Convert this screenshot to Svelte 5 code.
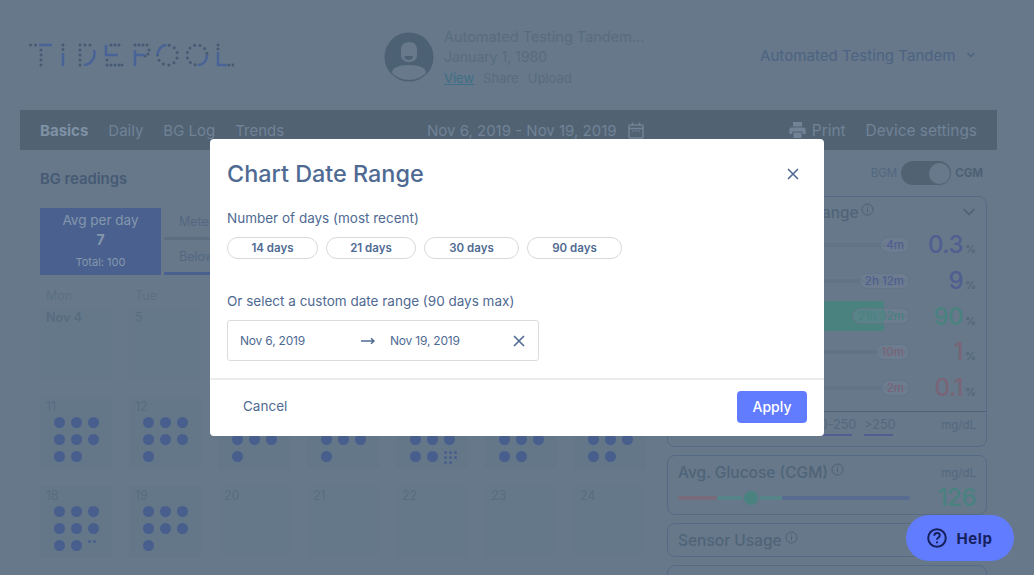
<script>
  const navLinks = ['Daily', 'BG Log', 'Trends'];
  const dayOptions = ['14 days', '21 days', '30 days', '90 days'];
  // only the first two columns stick out from under the dialog
  const weekdays = ['Mon', 'Tue', '', '', '', '', ''];

  const firstWeek = ['Nov 4', '5', '', '', '', '', ''];

  const weeks = [
    [
      { label: '11', dots: 8 },
      { label: '12', dots: 7 },
      { label: '13', dots: 7 },
      { label: '14', dots: 7 },
      { label: '15', dots: 8, extra: 8 },
      { label: '16', dots: 8 },
      { label: '17', dots: 8 }
    ],
    [
      { label: '18', dots: 8, extra: 2 },
      { label: '19', dots: 7 },
      { label: '20', dots: 0, empty: true },
      { label: '21', dots: 0, empty: true },
      { label: '22', dots: 0, empty: true },
      { label: '23', dots: 0, empty: true },
      { label: '24', dots: 0, empty: true }
    ]
  ];

  const ranges = [
    { time: '4m', value: '0.3', color: '#505e90', bar: 0 },
    { time: '2h 12m', value: '9', color: '#505e90', bar: 0 },
    { time: '21h 32m', value: '90', color: '#4a8280', bar: 89 },
    { time: '10m', value: '1', color: '#7a6477', bar: 0 },
    { time: '2m', value: '0.1', color: '#7a6477', bar: 0 }
  ];

  const legend = [
    { text: '<54', width: 20, color: '#7a6477' },
    { text: '54-70', width: 33, color: '#7a6477' },
    { text: '70-180', width: 40, color: '#4a8280' },
    { text: '180-250', width: 45, color: '#505e90' },
    { text: '>250', width: 29, color: '#505e90' }
  ];

  function ring(cx, cy, from, to, count) {
    const dots = [];
    for (let i = 0; i < count; i++) {
      const a = ((from + ((to - from) * i) / (count - 1)) * Math.PI) / 180;
      dots.push([cx + 10 * Math.cos(a), cy + 10 * Math.sin(a)]);
    }
    return dots;
  }

  // dotted logo, solid strokes are in the path below
  const logoDots = [
    [30.5, 45], [35.5, 45], [41, 50], [41, 55], [41, 60], [41, 65],
    [63, 45], [63, 49.5],
    [80, 45], [80, 50], [80, 55], [80, 60], [80, 65], [85, 45], [90, 45],
    [111, 45], [115, 45], [119, 45], [107, 60], [107, 65], [111, 65], [115, 65], [119, 65], [122, 65],
    [135, 45], [139, 45], [143, 45], [147, 45], [149, 50], [148, 54], [145, 56],
    ...ring(167.5, 55, -80, 180, 9),
    ...ring(197, 55, 100, 350, 9),
    [218, 45], [218, 49], [229, 65], [233, 65]
  ];
</script>

<div class="page">
  <header class="top">
    <svg class="logo" width="234" height="110" viewBox="0 0 234 110" aria-label="Tidepool">
      {#each logoDots as [x, y]}
        <circle cx={x} cy={y} r="1.500" />
      {/each}
      <path class="logo-solid" d="M39 45h13M63 53v13M94 50c2 7-2 14-10 15M106 45v10h12M135 50v16M135 55h10M157.500 55c0-5 4-10 9-10M207 55c0 6-4 10-9 10M218 52v13h9" />
    </svg>

    <div class="patient">
      <div class="avatar">
        <svg width="50" height="50" viewBox="0 0 50 50">
          <circle cx="25" cy="25" r="24.500" fill="#4d6175" />
          <path d="M25 10c5 0 8 3 8 7.500v6c0 4-3.500 6.500-8 6.500s-8-2.500-8-6.500v-6c0-4.500 3-7.500 8-7.500z" fill="#67798b" />
          <path d="M20.500 24h8.500c0 2.700-1.900 4-4.200 4s-4.300-1.300-4.300-4z" fill="#4d6175" />
          <path d="M8 41c0-5 6-8 17-8s17 3 17 8c-4 4-10 7-17 7s-13-3-17-7z" fill="#67798b" />
        </svg>
      </div>
      <div class="patient-info">
        <div class="patient-name">Automated Testing Tandem...</div>
        <div class="patient-dob">January 1, 1980</div>
        <div class="patient-links">
          <span class="active">View</span>
          <span>Share</span>
          <span>Upload</span>
        </div>
      </div>
    </div>

    <div class="account">
      <span>Automated Testing Tandem</span>
      <svg width="10" height="6" viewBox="0 0 10 6" fill="none" stroke="#4d6382" stroke-width="1.500"><path d="M1.500 1l3.500 3.500 3.500-3.500" /></svg>
    </div>
  </header>

  <nav class="nav">
    <div class="nav-left">
      <span class="nav-active">Basics</span>
      {#each navLinks as link}
        <span>{link}</span>
      {/each}
    </div>
    <div class="nav-date">
      <span>Nov 6, 2019 - Nov 19, 2019</span>
      <svg width="16" height="17" viewBox="0 0 16 17" fill="none" stroke="#708397" stroke-width="1.500">
        <rect x="1" y="3" width="14" height="13" rx="1" />
        <path d="M1 6.500h14M4.500 .5v3M11.500 .5v3" />
        <path d="M4 9h2M7 9h2M10 9h2" stroke-width="1" />
      </svg>
    </div>
    <div class="nav-right">
      <span class="print">
        <svg width="17" height="16" viewBox="0 0 17 16" fill="#708397">
          <path d="M4 0h9v4.500H4zM2.500 5.500h12c1.200 0 2.200 1 2.200 2.200v4.300h-3V9.500H3.300V12h-3V7.700c0-1.200 1-2.200 2.200-2.200zM4.500 10.500h8V16h-8z" />
        </svg>
        Print
      </span>
      <span>Device settings</span>
    </div>
  </nav>

  <main class="content">
    <section class="readings">
      <h2>BG readings</h2>
      <div class="summary">
        <div class="avg">
          <div class="avg-label">Avg per day</div>
          <div class="avg-value">7</div>
          <div class="avg-total">Total: 100</div>
        </div>
        <div class="summary-stats">
          <div class="stat">Meter</div>
          <div class="stat stat-active">Below</div>
        </div>
      </div>

      <div class="weekdays">
        {#each weekdays as name}
          <div class="weekday">{name}</div>
        {/each}
      </div>

      <div class="calendar">
        {#each firstWeek as label, i}
          <div class="day plain">
            <div class="day-num" class:bold={i === 0}>{label}</div>
          </div>
        {/each}

        {#each weeks as week}
          {#each week as day}
            <div class="day" class:empty={day.empty}>
              <div class="day-num">{day.label}</div>
              <div class="dots">
                {#each Array(day.dots) as _}
                  <span class="dot"></span>
                {/each}
                {#if day.extra}
                  <span class="mini">
                    {#each Array(day.extra) as _}<i></i>{/each}
                  </span>
                {/if}
              </div>
            </div>
          {/each}
        {/each}
      </div>
    </section>

    <aside class="sidebar">
      <div class="toggle-row">
        <span>BGM</span>
        <span class="switch"><span class="knob"></span></span>
        <span class="toggle-on">CGM</span>
      </div>

      <div class="card tir">
        <div class="card-head">
          <span class="card-title">Avg. Daily Time In Range</span>
          <svg class="info" width="13" height="13" viewBox="0 0 13 13" fill="none" stroke="#4d6175"><circle cx="6.500" cy="6.500" r="5.500" /><path d="M6.500 5.500v4M6.500 3v1.200" /></svg>
          <svg class="chev" width="14" height="8" viewBox="0 0 14 8" fill="none" stroke="#4d6175" stroke-width="1.500"><path d="M1.500 1l5.500 5.500 5.500-5.500" /></svg>
        </div>
        {#each ranges as row}
          <div class="range">
            <div class="track">
              {#if row.bar}<div class="fill" style="width: {row.bar}%"></div>{/if}
              <span class="time" style="color: {row.color}">{row.time}</span>
            </div>
            <div class="pct"><span style="color: {row.color}">{row.value}</span><small>%</small></div>
          </div>
        {/each}
        <div class="legend">
          {#each legend as item}
            <span class="seg" style="width: {item.width}px; border-color: {item.color}">{item.text}</span>
          {/each}
          <span class="unit">mg/dL</span>
        </div>
      </div>

      <div class="card glucose">
        <div class="glucose-head">
          <span class="card-title">Avg. Glucose (CGM)</span>
          <svg class="info" width="13" height="13" viewBox="0 0 13 13" fill="none" stroke="#4d6175"><circle cx="6.500" cy="6.500" r="5.500" /><path d="M6.500 5.500v4M6.500 3v1.200" /></svg>
          <span class="unit">mg/dL</span>
        </div>
        <div class="glucose-row">
          <div class="scale">
            <span class="marker"></span>
          </div>
          <span class="glucose-value">126</span>
        </div>
      </div>

      <div class="card usage">
        <span class="card-title">Sensor Usage</span>
        <svg class="info" width="13" height="13" viewBox="0 0 13 13" fill="none" stroke="#4d6175"><circle cx="6.500" cy="6.500" r="5.500" /><path d="M6.500 5.500v4M6.500 3v1.200" /></svg>
      </div>
      <div class="card stub"></div>
    </aside>
  </main>
</div>

<div class="modal">
  <div class="modal-head">
    <h1>Chart Date Range</h1>
    <button class="close" aria-label="Close">
      <svg width="12" height="12" viewBox="0 0 12 12" fill="none" stroke="#4f6a92" stroke-width="1.600"><path d="M1 1l10 10M11 1L1 11" /></svg>
    </button>
  </div>
  <div class="modal-body">
    <div class="field-label">Number of days (most recent)</div>
    <div class="pills">
      {#each dayOptions as option}
        <button class="pill">{option}</button>
      {/each}
    </div>
    <div class="field-label custom">Or select a custom date range (90 days max)</div>
    <div class="date-range">
      <span class="date">Nov 6, 2019</span>
      <svg class="arrow" width="14" height="8" viewBox="0 0 14 8" fill="none" stroke="#4f6a92" stroke-width="1.500"><path d="M0 4h13M10 1.200L13 4l-3 2.800" /></svg>
      <span class="date">Nov 19, 2019</span>
      <svg class="clear" width="12" height="12" viewBox="0 0 12 12" fill="none" stroke="#4f6a92" stroke-width="1.600"><path d="M1 1l10 10M11 1L1 11" /></svg>
    </div>
  </div>
  <div class="modal-foot">
    <button class="cancel">Cancel</button>
    <button class="apply">Apply</button>
  </div>
</div>

<button class="help">
  <svg width="20" height="20" viewBox="0 0 20 20" fill="none" stroke="#15205e" stroke-width="2">
    <circle cx="10" cy="10" r="8.800" />
    <path d="M7.300 7.800c0-1.700 1.200-2.700 2.800-2.700s2.700 1 2.700 2.400c0 2-2.800 2-2.800 4.200" />
    <path d="M10 13.600v1.700" />
  </svg>
  Help
</button>

<style>
  :global(body) {
    margin: 0;
    background: #66788a;
    overflow: hidden;
    font-family: Inter, "Liberation Sans", sans-serif;
  }

  .page {
    width: 1034px;
    height: 575px;
    overflow: hidden;
    color: #4d6175;
  }

  .top {
    height: 110px;
    display: flex;
    align-items: flex-start;
  }

  .logo {
    flex-shrink: 0;
  }

  .logo circle {
    fill: #465a74;
  }

  .logo-solid {
    fill: none;
    stroke: #4a6396;
    stroke-width: 2.500;
  }

  .patient {
    display: flex;
    align-items: flex-start;
    gap: 10px;
    margin: 26px 0 0 150px;
    width: 376px;
    color: #586c80;
    font-size: 14px;
    line-height: 20.500px;
  }

  .avatar {
    height: 50px;
    margin-top: 6px;
  }

  .patient-name {
    font-size: 14.500px;
    line-height: 21px;
  }

  .patient-links {
    display: flex;
    gap: 9px;
    font-size: 13px;
  }

  .patient-links .active {
    color: #3e6f86;
    text-decoration: underline;
  }

  .account {
    display: flex;
    align-items: center;
    gap: 10px;
    font-size: 15.100px;
    color: #4d6382;
    height: 110px;
  }

  .nav {
    width: 977px;
    height: 40px;
    padding: 0 20px;
    margin-left: 20px;
    box-sizing: border-box;
    background: #516273;
    display: grid;
    grid-template-columns: 387px auto 1fr;
    align-items: center;
    color: #708397;
    font-size: 15px;
  }

  .nav-left {
    display: flex;
    gap: 20px;
  }

  .nav-active {
    font-weight: 700;
    color: #7f92a6;
  }

  .nav-date {
    display: flex;
    align-items: center;
    gap: 11px;
  }

  .nav-right {
    display: flex;
    justify-content: flex-end;
    gap: 20px;
    font-size: 15.400px;
  }

  .print {
    display: flex;
    align-items: center;
    gap: 6px;
  }

  .content {
    display: flex;
    padding-left: 40px;
  }

  .readings {
    width: 627px;
    flex-shrink: 0;
  }

  h2 {
    margin: 20px 0 0;
    font-size: 14.800px;
    line-height: 18px;
    font-weight: 600;
    color: #465a74;
  }

  .summary {
    display: flex;
    gap: 3px;
    margin-top: 20px;
  }

  .avg {
    width: 121px;
    height: 67px;
    background: #4a6190;
    color: #8597ab;
    text-align: center;
    padding-top: 3px;
    box-sizing: border-box;
  }

  .avg-label {
    font-size: 13.500px;
    line-height: 18px;
  }

  .avg-value {
    font-size: 14px;
    font-weight: 700;
    line-height: 20px;
    margin-top: 1px;
  }

  .avg-total {
    font-size: 11px;
    line-height: 14px;
    margin-top: 5px;
  }

  .summary-stats {
    flex: 1;
    display: grid;
    grid-template-rows: 32px 35px;
  }

  .stat {
    border-bottom: 3px solid #5c6f81;
    font-size: 12.500px;
    line-height: 16px;
    padding: 6px 0 0 15px;
    color: #536880;
    box-sizing: border-box;
  }

  .stat-active {
    border-bottom-color: #4a6190;
    padding-top: 9px;
  }

  .weekdays, .calendar {
    display: grid;
    grid-template-columns: repeat(7, 72px);
    column-gap: 17px;
  }

  .weekdays {
    margin: 13px 0 4px;
    grid-auto-rows: 16px;
  }

  .calendar {
    grid-auto-rows: 72px;
    row-gap: 17px;
  }

  .day {
    background: #637789;
    box-sizing: border-box;
    padding-top: 2px;
  }

  .day.plain, .day.empty {
    background: #65788a;
  }

  .weekday {
    font-size: 12.500px;
    line-height: 16px;
    padding-left: 6px;
    color: #5c7084;
  }

  .day-num {
    font-size: 12.500px;
    line-height: 16px;
    padding-left: 6px;
    color: #586c80;
  }

  .bold {
    font-weight: 700;
  }

  .dots {
    display: grid;
    grid-template-columns: repeat(3, 11px);
    grid-auto-rows: 11px;
    gap: 6px;
    padding-left: 14px;
    margin-top: 2px;
  }

  .dot {
    border-radius: 50%;
    background: #485e8d;
  }

  .mini {
    display: grid;
    grid-template-columns: repeat(3, 3px);
    grid-auto-rows: 3px;
    gap: 2px;
    align-content: start;
  }

  .mini i {
    background: #485e8d;
    border-radius: 50%;
  }

  .sidebar {
    width: 320px;
    margin-top: 11px;
    display: flex;
    flex-direction: column;
    gap: 8px;
  }

  .toggle-row {
    display: flex;
    justify-content: flex-end;
    align-items: center;
    gap: 4px;
    font-size: 11.500px;
    height: 24px;
    margin-bottom: 3px;
    color: #536880;
    padding-right: 4px;
  }

  .toggle-on {
    font-weight: 700;
    color: #4d6175;
  }

  .switch {
    width: 50px;
    height: 24px;
    border-radius: 12px;
    background: #516273;
    display: flex;
    justify-content: flex-end;
    align-items: center;
    padding-right: 1px;
    box-sizing: border-box;
  }

  .knob {
    width: 21px;
    height: 21px;
    border-radius: 50%;
    background: #68798b;
  }

  .card {
    border: 1px solid #556b85;
    border-radius: 8px;
    box-sizing: border-box;
    flex-shrink: 0;
  }

  .tir {
    height: 251px;
  }

  .card-head {
    height: 30px;
    display: flex;
    align-items: center;
    padding: 0 10px;
    gap: 3px;
  }

  .card-title {
    font-size: 15.500px;
    font-weight: 500;
    color: #4f6478;
  }

  .tir .card-title {
    font-size: 15.250px;
  }

  .info {
    margin-bottom: 6px;
  }

  .chev {
    margin-left: auto;
  }

  .range {
    display: flex;
    align-items: center;
    height: 35.700px;
    padding: 0 10px;
  }

  .track {
    flex: 1;
    height: 4px;
    background: #617487;
    border-radius: 2px;
    position: relative;
    display: flex;
    align-items: center;
    justify-content: flex-end;
  }

  .fill {
    position: absolute;
    left: 0;
    top: -13px;
    height: 30px;
    background: #4a8280;
  }

  .time {
    position: relative;
    font-size: 11.500px;
    font-weight: 500;
    line-height: 14px;
    padding: 0 5px;
    border-radius: 8px;
    background: rgba(130, 140, 160, 0.25);
    border: 1px solid #627589;
  }

  .pct {
    width: 66px;
    text-align: right;
    font-size: 24px;
    font-weight: 500;
    letter-spacing: -0.5px;
  }

  .pct small {
    font-size: 11px;
    letter-spacing: 0;
    color: #4f6478;
    margin-left: 2px;
  }

  .legend {
    border-top: 1px solid #4f6478;
    height: 34px;
    display: flex;
    gap: 12px;
    padding: 4px 10px 0;
    margin-top: 6px;
    box-sizing: border-box;
    font-size: 12.500px;
    color: #536880;
  }

  .seg {
    height: 20px;
    line-height: 18px;
    box-sizing: border-box;
    border-bottom: 2px solid;
    white-space: nowrap;
  }

  .unit {
    margin-left: auto;
    font-size: 11.500px;
    line-height: 18px;
    color: #536880;
  }

  .glucose {
    height: 60px;
    padding: 7px 10px 0;
  }

  .glucose-head {
    display: flex;
    align-items: center;
    gap: 3px;
  }

  .glucose-row {
    display: flex;
    align-items: center;
    justify-content: space-between;
    margin-top: 3px;
  }

  .scale {
    width: 232px;
    height: 4px;
    border-radius: 2px;
    background: linear-gradient(90deg, #7a6b7c 0 17%, #578488 17% 45%, #586b90 45%);
    position: relative;
  }

  .marker {
    position: absolute;
    left: 66px;
    top: -5px;
    width: 14px;
    height: 14px;
    border-radius: 50%;
    background: #4a8280;
    box-shadow: 0 0 0 2px #66788a;
  }

  .glucose-value {
    font-size: 24px;
    line-height: 26px;
    font-weight: 500;
    letter-spacing: -0.5px;
    color: #4a8280;
  }

  .usage {
    height: 34px;
    padding: 0 10px;
    display: flex;
    align-items: center;
    gap: 3px;
  }

  .stub {
    height: 40px;
  }

  .modal {
    position: absolute;
    left: 210px;
    top: 139px;
    width: 614px;
    height: 297px;
    background: #fff;
    border-radius: 4px;
    display: flex;
    flex-direction: column;
    color: #4f6a92;
  }

  .modal-head {
    display: flex;
    align-items: center;
    justify-content: space-between;
    padding: 16px 25px 0 17px;
    height: 36px;
  }

  h1 {
    margin: 0;
    font-size: 23.400px;
    font-weight: 500;
    color: #4f6a92;
  }

  .close, .cancel, .apply, .pill, .help {
    font-family: inherit;
    cursor: pointer;
  }

  .close {
    border: 0;
    background: none;
    padding: 0;
    height: 12px;
    line-height: 0;
    margin-top: 2px;
  }

  .modal-body {
    padding: 18px 17px 0;
    flex: 1;
  }

  .field-label {
    font-size: 13.500px;
    line-height: 18px;
  }

  .custom {
    margin-top: 33px;
  }

  .pills {
    display: flex;
    gap: 8px;
    margin-top: 10px;
  }

  .pill {
    height: 22px;
    padding: 0;
    width: 91px;
    background: #fff;
    border: 1px solid #d9d9d9;
    border-radius: 11px;
    font-size: 11.500px;
    font-weight: 600;
    color: #4f6a92;
  }

  .pill:nth-child(2) { width: 90px; }
  .pill:nth-child(3), .pill:nth-child(4) { width: 95px; }

  .date-range {
    width: 312px;
    height: 41px;
    margin-top: 10px;
    border: 1px solid #dcdcdc;
    border-radius: 3px;
    box-sizing: border-box;
    display: flex;
    align-items: center;
    padding: 0 13px 0 12px;
    font-size: 12px;
  }

  .date {
    letter-spacing: -0.2px;
  }

  .date:first-child {
    width: 121px;
  }

  .arrow {
    margin-right: 15px;
  }

  .clear {
    margin-left: auto;
  }

  .modal-foot {
    border-top: 2px solid #ececec;
    height: 58px;
    flex-shrink: 0;
    display: flex;
    align-items: center;
    justify-content: space-between;
    padding: 0 17px 2px 33px;
    box-sizing: border-box;
  }

  .cancel {
    border: 0;
    background: none;
    padding: 0 0 2px;
    font-size: 13.500px;
    color: #4f6a92;
  }

  .apply {
    width: 70px;
    height: 32px;
    border: 0;
    border-radius: 4px;
    background: #627cff;
    color: #fff;
    font-size: 14px;
    font-weight: 500;
    padding: 0 0 2px;
  }

  .help {
    position: absolute;
    left: 906px;
    top: 515px;
    width: 108px;
    height: 46px;
    border: 0;
    border-radius: 23px;
    background: #627cff;
    color: #15205e;
    font-size: 15px;
    font-weight: 700;
    letter-spacing: 0.6px;
    display: flex;
    align-items: center;
    justify-content: center;
    gap: 9px;
    padding: 0;
  }
</style>
